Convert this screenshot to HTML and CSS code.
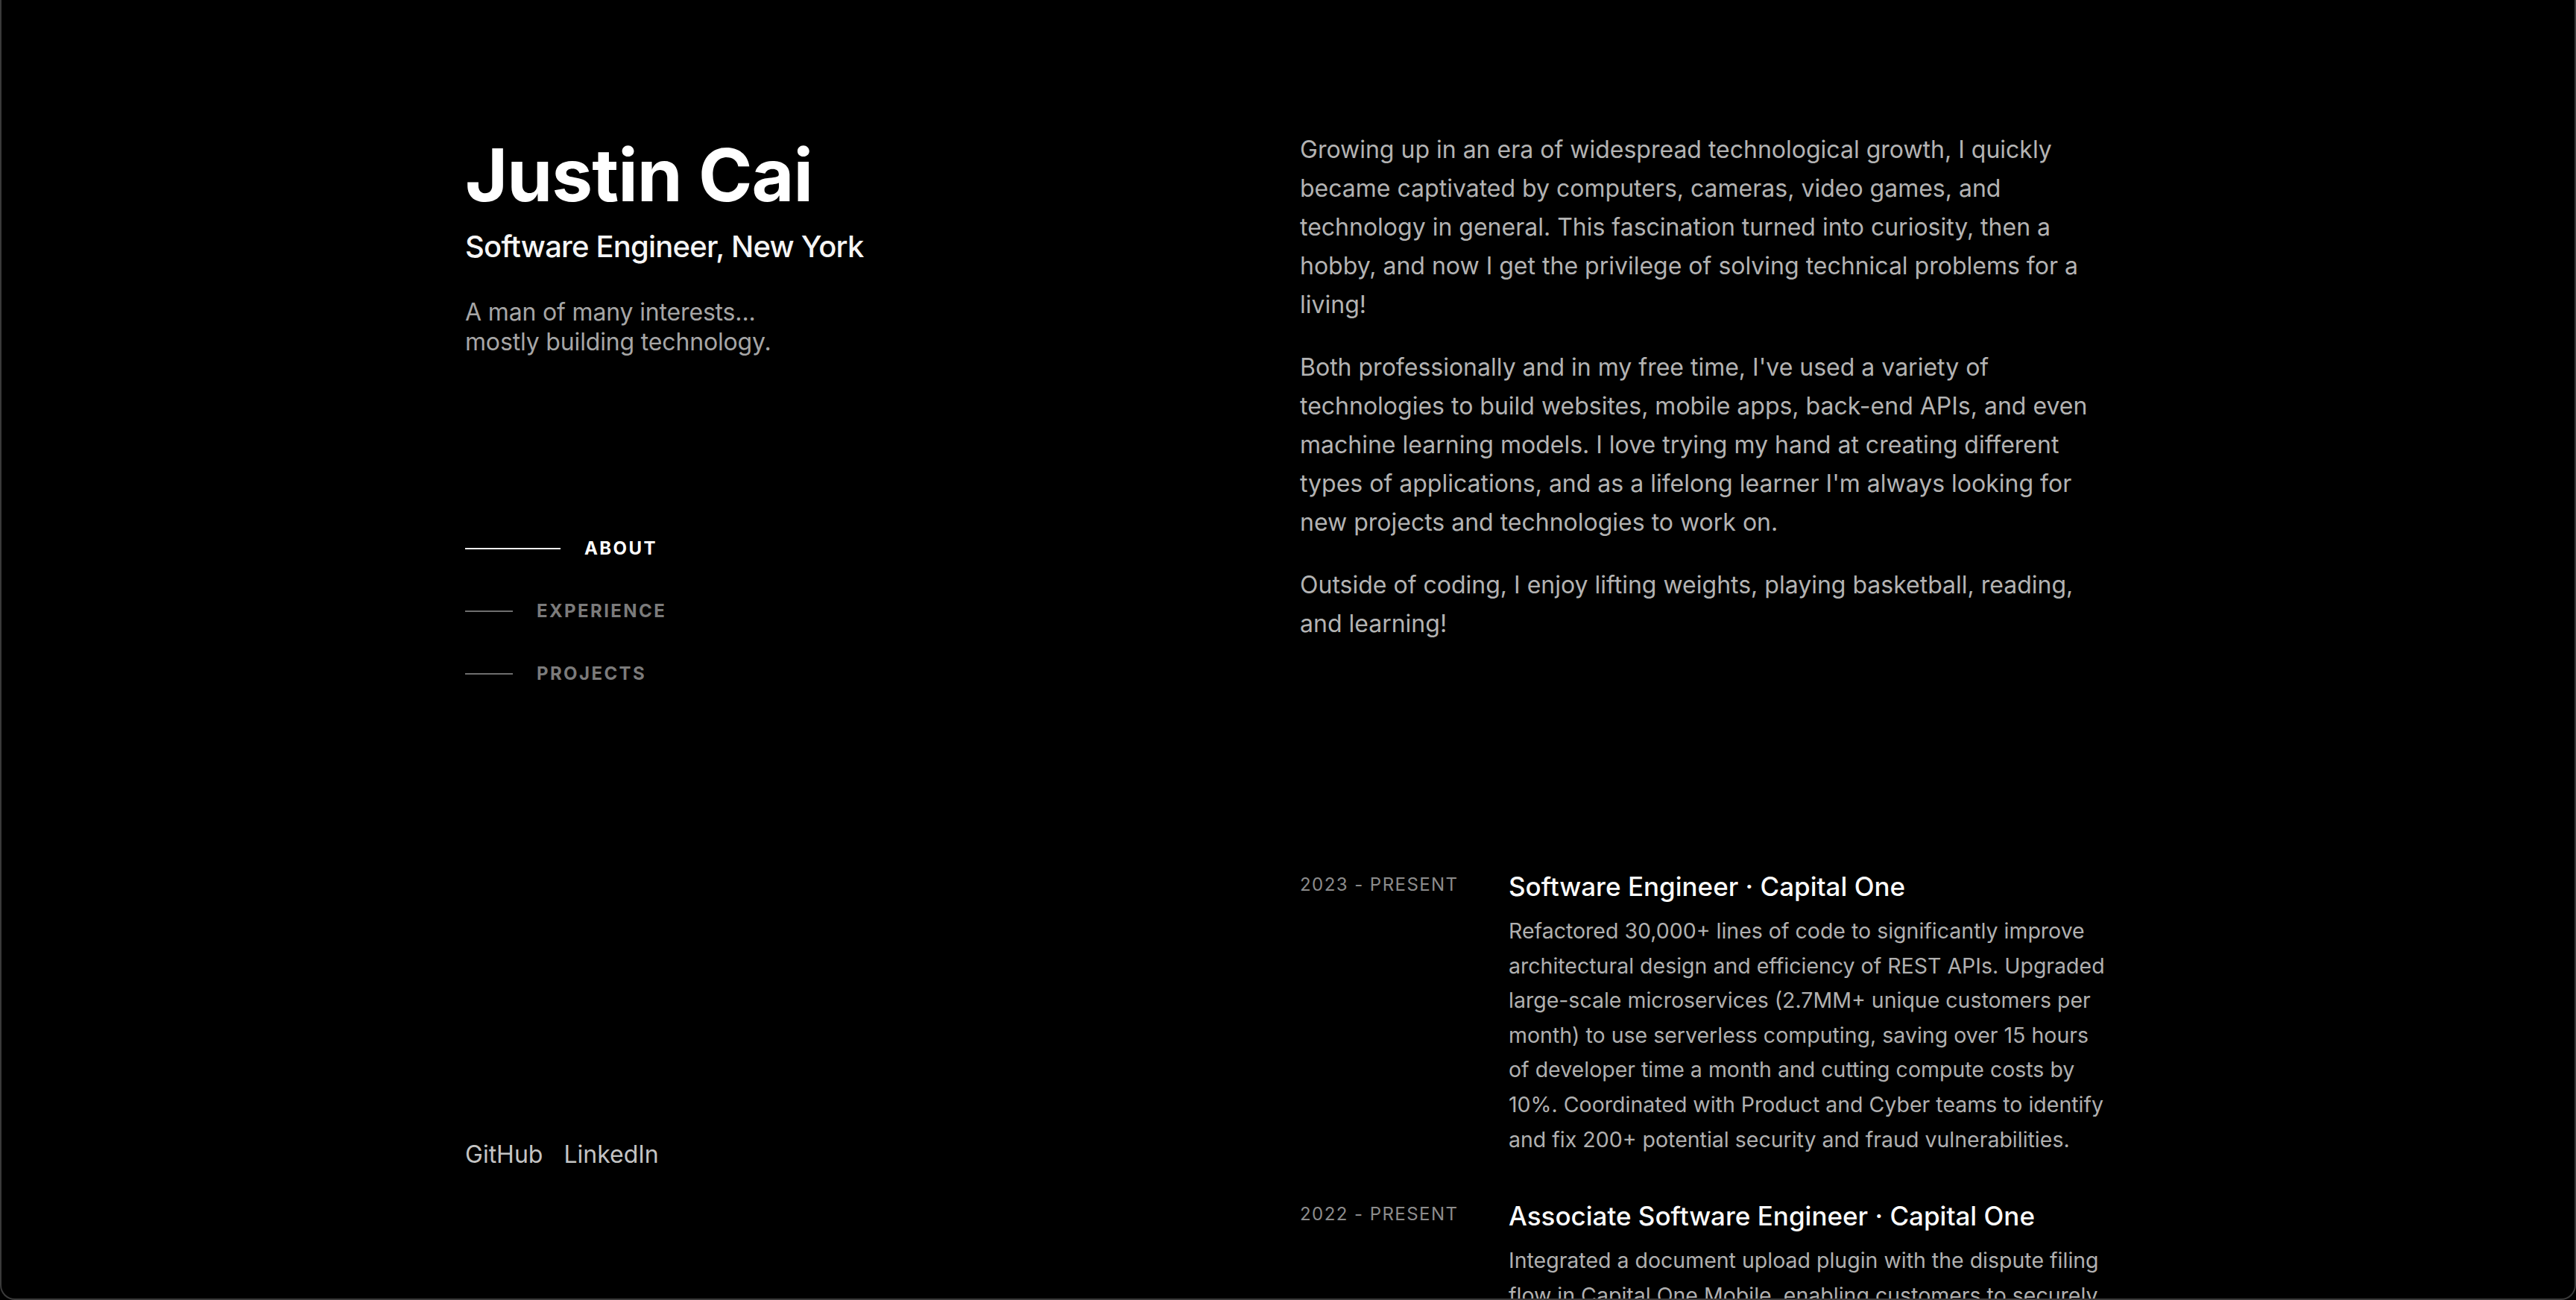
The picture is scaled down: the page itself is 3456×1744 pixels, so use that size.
FILE: index.html
```html
<!DOCTYPE html>
<html lang="en">
<head>
<meta charset="utf-8">
<title>Justin Cai</title>
<link rel="stylesheet" href="styles.css">
</head>
<body>
<div class="frame">
  <div class="container">
    <header class="side">
      <div class="intro">
        <h1 class="name">Justin Cai</h1>
        <h2 class="role">Software Engineer, New York</h2>
        <p class="tagline">A man of many interests...<br>mostly building technology.</p>
        <nav class="nav">
          <a class="nav-item active" href="#about"><span class="nav-line"></span><span class="nav-text">About</span></a>
          <a class="nav-item" href="#experience"><span class="nav-line"></span><span class="nav-text">Experience</span></a>
          <a class="nav-item" href="#projects"><span class="nav-line"></span><span class="nav-text">Projects</span></a>
        </nav>
      </div>
      <ul class="socials">
        <li><a href="#">GitHub</a></li>
        <li><a href="#">LinkedIn</a></li>
      </ul>
    </header>
    <main class="content">
      <section class="about" id="about">
        <p>Growing up in an era of widespread technological growth, I quickly became captivated by computers, cameras, video games, and technology in general. This fascination turned into curiosity, then a hobby, and now I get the privilege of solving technical problems for a living!</p>
        <p>Both professionally and in my free time, I've used a variety of technologies to build websites, mobile apps, back-end APIs, and even machine learning models. I love trying my hand at creating different types of applications, and as a lifelong learner I'm always looking for new projects and technologies to work on.</p>
        <p>Outside of coding, I enjoy lifting weights, playing basketball, reading, and learning!</p>
      </section>
      <section class="experience" id="experience">
        <ol class="jobs">
          <li class="job">
            <div class="job-date">2023 - Present</div>
            <div class="job-body">
              <h3 class="job-title">Software Engineer · Capital One</h3>
              <p class="job-desc">Refactored 30,000+ lines of code to significantly improve architectural design and efficiency of REST APIs. Upgraded large-scale microservices (2.7MM+ unique customers per month) to use serverless computing, saving over 15 hours of developer time a month and cutting compute costs by 10%. Coordinated with Product and Cyber teams to identify and fix 200+ potential security and fraud vulnerabilities.</p>
            </div>
          </li>
          <li class="job">
            <div class="job-date">2022 - Present</div>
            <div class="job-body">
              <h3 class="job-title">Associate Software Engineer · Capital One</h3>
              <p class="job-desc">Integrated a document upload plugin with the dispute filing flow in Capital One Mobile, enabling customers to securely upload supporting documents for their disputes and reducing manual follow-ups.</p>
            </div>
          </li>
        </ol>
      </section>
    </main>
  </div>
</div>
</body>
</html>
```

FILE: styles.css
```css
* { box-sizing: border-box; }
html, body { margin: 0; padding: 0; background: #000; }
body {
  font-family: Inter, "Noto Sans", "Liberation Sans", sans-serif;
  color: #b3b3b3;
  -webkit-font-smoothing: antialiased;
}
a { color: inherit; text-decoration: none; }

.frame {
  height: 1744px;
  overflow: hidden;
  border-left: 2px solid #3a3a3a;
  border-right: 2px solid #3a3a3a;
  border-bottom: 2px solid #3a3a3a;
  border-radius: 0 0 20px 20px;
  background: #000;
}

.container {
  width: 2208px;
  margin: 0 auto;
  display: flex;
  justify-content: space-between;
  gap: 32px;
}

.side {
  width: 1088px;
  height: 1742px;
  padding: 186px 0 169px 0;
  display: flex;
  flex-direction: column;
  justify-content: space-between;
}

.name {
  margin: 0;
  font-size: 98px;
  line-height: 98px;
  font-weight: 700;
  letter-spacing: -0.01em;
  color: #fff;
}
.role {
  margin: 19px 0 0 0;
  font-size: 40px;
  line-height: 56px;
  font-weight: 500;
  letter-spacing: -0.02em;
  color: #f5f5f5;
}
.tagline {
  margin: 40px 0 0 0;
  font-size: 32px;
  line-height: 40px;
  letter-spacing: -0.005em;
  color: #a6a6a6;
}

.nav {
  margin-top: 215px;
  display: flex;
  flex-direction: column;
  align-items: flex-start;
}
.nav-item {
  display: flex;
  align-items: center;
  padding: 24px 0;
  line-height: 36px;
}
.nav-line {
  display: block;
  width: 64px;
  height: 2px;
  margin-right: 32px;
  background: #6e6e6e;
}
.nav-text {
  font-size: 24px;
  font-weight: 700;
  letter-spacing: 0.1em;
  text-transform: uppercase;
  color: #7b7b7b;
}
.nav-item.active .nav-line { width: 128px; background: #f0f0f0; }
.nav-item.active .nav-text { color: #fff; }

.socials {
  list-style: none;
  margin: 0;
  padding: 0;
  display: flex;
  gap: 28px;
  font-size: 32px;
  line-height: 48px;
  color: #c4c4c4;
}

.content {
  width: 1088px;
  padding-top: 175px;
}
.about p {
  margin: 0 0 32px 0;
  font-size: 32px;
  line-height: 52px;
  color: #b3b3b3;
}
.about p:last-child { margin-bottom: 0; }
.about { margin-bottom: 302px; }

.jobs { list-style: none; margin: 0; padding: 0; }
.job {
  display: grid;
  grid-template-columns: 248px 1fr;
  column-gap: 32px;
  margin-bottom: 55px;
}
.job-date {
  margin-top: 6px;
  font-size: 24px;
  line-height: 32px;
  font-weight: 400;
  letter-spacing: 0.06em;
  text-transform: uppercase;
  color: #8c8c8c;
}
.job-title {
  margin: 0;
  font-size: 35px;
  line-height: 48px;
  font-weight: 500;
  color: #fafafa;
}
.job-desc {
  margin: 13px 0 0 0;
  font-size: 28.5px;
  line-height: 46.6px;
  color: #b0b0b0;
}
```
